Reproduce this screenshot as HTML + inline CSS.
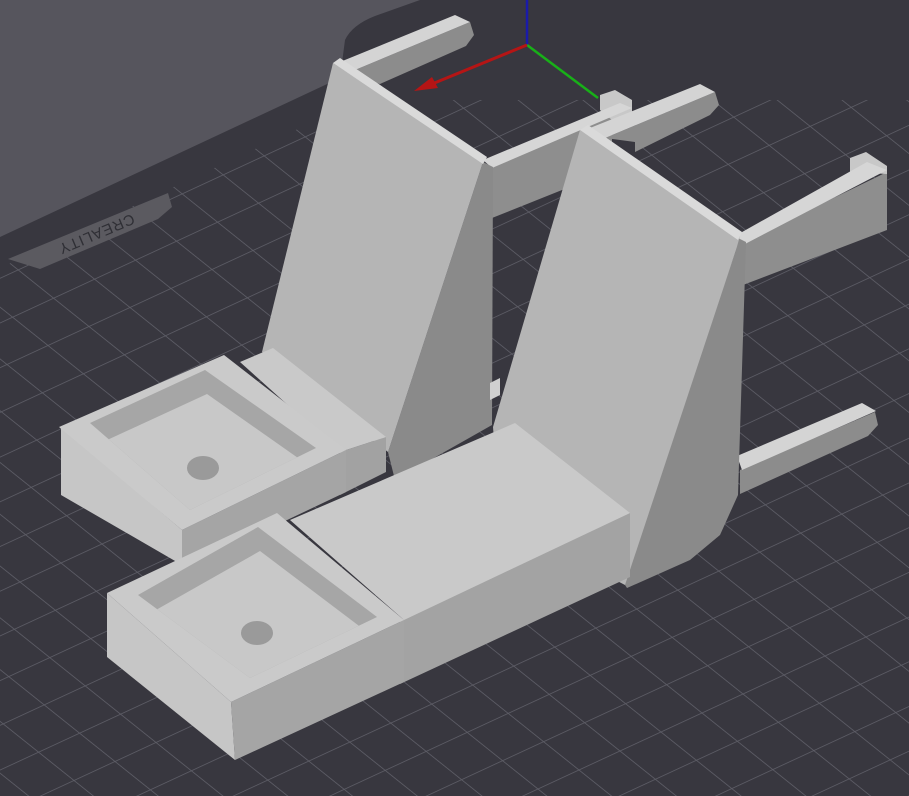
<!DOCTYPE html>
<html><head><meta charset="utf-8"><style>
html,body{margin:0;padding:0;background:#56555d;}
svg{display:block;}
</style></head><body>
<svg width="909" height="796" viewBox="0 0 909 796" xmlns="http://www.w3.org/2000/svg">
<defs>
<pattern id="grid" patternUnits="userSpaceOnUse" width="1" height="1" patternTransform="matrix(41 -19 35.4 28.3 10 5)">
<path d="M0 0 H1 M0 0 V1" stroke="#5e5e67" stroke-width="0.04" fill="none"/>
</pattern>
<clipPath id="bedclip"><path d="M0 237 L340 78 L345 40 Q352 25 375 16 L420 0 L909 0 L909 796 L0 796 Z"/></clipPath>
<clipPath id="p1"><polygon points="90,423 205,370 316,448 190,510"/></clipPath>
<clipPath id="p2"><polygon points="138,595 258,527 377,617 250,678"/></clipPath>
</defs>
<rect width="909" height="796" fill="#56555d"/>
<path d="M0 237 L340 78 L345 40 Q352 25 375 16 L420 0 L909 0 L909 796 L0 796 Z" fill="#38373f"/>
<g clip-path="url(#bedclip)">
<path d="M0 268 L360 100 L909 100 L909 796 L0 796 Z" fill="url(#grid)"/>
</g>
<polygon points="8,259 168,193 172,207 158,219 40,269" fill="#5b5a60"/>
<text x="0" y="0" transform="translate(96,233) rotate(157)" text-anchor="middle" dominant-baseline="middle" font-family="Liberation Sans, sans-serif" font-size="15" fill="#2f2f35" letter-spacing="1">CREALITY</text>

<polygon points="355,70 470,22 474,35 466,46 380,84 372,82" fill="#8c8c8c"/>
<polygon points="340,62 455,15 470,22 355,70" fill="#d4d4d4"/>
<polygon points="492,166 612,116 612,170 492,218" fill="#8e8e8e"/>
<polygon points="600,95 615,90 632,100 632,112 612,120 600,110" fill="#c8c8c8"/>
<polygon points="483,160 620,103 632,108 492,168" fill="#d6d6d6"/>
<line x1="527" y1="0" x2="527" y2="45" stroke="#1a1aa8" stroke-width="2.5"/>
<line x1="527" y1="45" x2="598" y2="98" stroke="#18b018" stroke-width="2.5"/>
<line x1="527" y1="45" x2="432" y2="84" stroke="#b51515" stroke-width="3"/>
<polygon points="414,91 432,77 438,88" fill="#b51515"/>
<polygon points="483,162 493,167 492,425 395,480 388,452" fill="#8a8a8a"/>
<polygon points="333,63 483,162 388,452 262,352" fill="#b5b5b5"/>
<polygon points="333,63 340,58 487,157 483,164" fill="#dadada"/>
<polygon points="490,383 500,378 500,395 490,400" fill="#d0d0d0"/>
<polygon points="605,138 715,92 719,105 710,115 635,152 635,142" fill="#8c8c8c"/>
<polygon points="590,128 700,84 715,92 605,138" fill="#d4d4d4"/>
<polygon points="743,242 887,172 887,230 743,285" fill="#8e8e8e"/>
<polygon points="850,172 850,158 866,152 887,166 887,174" fill="#c8c8c8"/>
<polygon points="735,236 867,162 887,170 745,244" fill="#d6d6d6"/>
<polygon points="740,470 875,412 878,425 868,436 740,494" fill="#8c8c8c"/>
<polygon points="737,456 862,403 876,411 742,470" fill="#d4d4d4"/>
<polygon points="738,238 746,242 738,495 720,535 690,560 627,588 623,582 736,250" fill="#8a8a8a"/>
<polygon points="580,130 740,236 736,250 625,585 500,520 493,427" fill="#b5b5b5"/>
<polygon points="580,130 588,125 742,232 738,240" fill="#dadada"/>
<polygon points="340,452 386,437 386,472 340,495" fill="#a2a2a2"/>
<polygon points="240,362 273,348 386,437 340,452" fill="#c9c9c9"/>
<polygon points="61,427 182,530 182,565 61,495" fill="#c6c6c6"/>
<polygon points="182,530 346,450 346,492 182,570" fill="#a5a5a5"/>
<polygon points="59,427 224,355 346,450 182,530" fill="#cacaca"/>
<polygon points="90,423 205,370 316,448 190,510" fill="#a6a6a6"/>
<polygon clip-path="url(#p1)" points="92,447 207,394 318,472 192,534" fill="#c8c8c8"/>
<ellipse cx="203" cy="468" rx="16" ry="12" fill="#9a9a9a"/>
<polygon points="400,620 630,513 630,577 400,684" fill="#a3a3a3"/>
<polygon points="290,520 515,423 630,513 404,620" fill="#c9c9c9"/>
<polygon points="107,593 231,702 235,760 107,657" fill="#c6c6c6"/>
<polygon points="231,702 404,620 404,682 235,760" fill="#a5a5a5"/>
<polygon points="107,593 277,513 404,620 231,702" fill="#cacaca"/>
<polygon points="138,595 258,527 377,617 250,678" fill="#a6a6a6"/>
<polygon clip-path="url(#p2)" points="140,619 260,551 379,641 252,702" fill="#c8c8c8"/>
<ellipse cx="257" cy="633" rx="16" ry="12" fill="#9a9a9a"/>
</svg>
</body></html>
